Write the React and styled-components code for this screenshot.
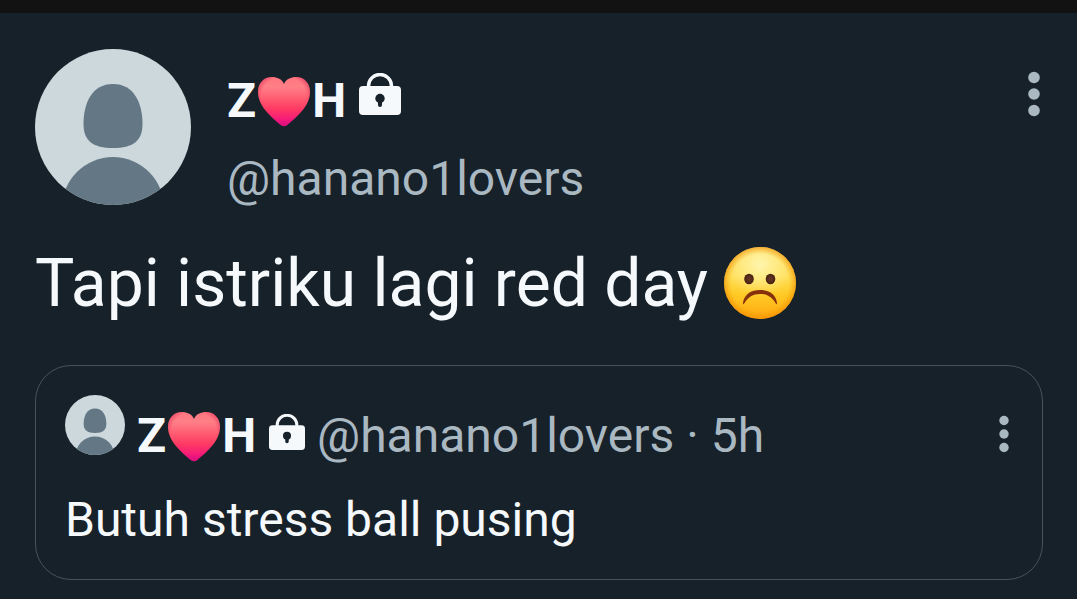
import * as React from 'react'
import styled, { createGlobalStyle } from 'styled-components'

const GlobalStyle = createGlobalStyle`
  * {
    box-sizing: border-box;
  }
  body {
    margin: 0;
    background: #17212a;
    font-family: Roboto, 'Noto Sans', sans-serif;
  }
`
const StatusStrip = styled.div`
  height: 13px;
  background: #121212;
`
const Tweet = styled.article`
  padding: 36px 34px 19px 35px;
  color: #f5f9fc;
`
const Header = styled.header`
  display: flex;
  align-items: flex-start;
`
const AvatarLink = styled.a`
  flex: none;
  width: ${props => props.$size}px;
  height: ${props => props.$size}px;
  border-radius: 50%;
  overflow: hidden;

  svg {
    display: block;
    width: 100%;
    height: 100%;
  }
`
const Author = styled.div`
  display: flex;
  flex: 1;
  flex-direction: ${props => (props.$inline ? 'row' : 'column')};
  gap: ${props => (props.$inline ? '12px' : '22px')};
  padding: ${props => (props.$inline ? '13px 0 0 12px' : '24px 0 0 36px')};
`
const Name = styled.strong`
  display: flex;
  align-items: center;
  font-size: 48px;
  line-height: 56px;
  font-weight: 700;
`
const HeartIcon = styled.svg`
  width: 56px;
  height: 52px;
`
const LockIcon = styled.svg`
  width: ${props => props.$size}px;
  height: ${props => props.$size}px;
  align-self: flex-end;
  margin: 0 0 14px 13px;
`
const Handle = styled.a`
  color: #aab8c2;
  font-size: 48px;
  line-height: 56px;
  text-decoration: none;
`
const Meta = styled.span`
  color: #aab8c2;
  font-size: 48px;
  line-height: 56px;
  white-space: nowrap;
`
const MenuButton = styled.button`
  flex: none;
  display: block;
  width: 18px;
  margin-top: ${props => (props.$small ? '20px' : '22px')};
  padding: 0;
  border: 0;
  background: none;
  color: #aab8c2;
  cursor: pointer;

  svg {
    display: block;
    margin: 0 auto;
    width: 18px;
    height: ${props => (props.$small ? '38px' : '46px')};
  }
`
const TweetText = styled.p`
  margin: 38px 0 43px;
  font-size: 66px;
  line-height: 77px;
`
const Sad = styled.svg`
  width: 72px;
  height: 72px;
  vertical-align: -13px;
`
const Quote = styled.section`
  padding: 29px 29px 31px;
  border: 1px solid #47525c;
  border-radius: 36px;
`
const QuoteText = styled.p`
  margin: 28px 0 0;
  font-size: 48px;
  line-height: 56px;
`

function Avatar ({ size }) {
  return (
    <AvatarLink href="#profile" aria-label="Profile" $size={size}>
      <svg viewBox="0 0 156 156">
        <rect width="156" height="156" fill="#ccd8dc" />
        <path d="M78 35 C99 35 107.500 54 107.500 75 C107.500 92 98 99 78 99 C58 99 48.500 92 48.500 75 C48.500 54 57 35 78 35 Z" fill="#647785" />
        <circle cx="78" cy="159" r="51" fill="#647785" />
      </svg>
    </AvatarLink>
  )
}

function Heart ({ id }) {
  return (
    <HeartIcon viewBox="0 0 56 52" role="img" aria-label="red heart">
      <defs>
        <linearGradient id={`${id}-fill`} x1="0" y1="0" x2="0" y2="1">
          <stop offset="0" stopColor="#ff7580" />
          <stop offset="0.2" stopColor="#ff8087" />
          <stop offset="0.45" stopColor="#ff5a70" />
          <stop offset="0.65" stopColor="#ff3963" />
          <stop offset="0.85" stopColor="#f61d78" />
          <stop offset="1" stopColor="#e300b0" />
        </linearGradient>
        <radialGradient id={`${id}-edge`} cx="0.5" cy="0.42" r="0.58">
          <stop offset="0.75" stopColor="#d81b4c" stopOpacity="0" />
          <stop offset="1" stopColor="#d81b4c" stopOpacity="0.6" />
        </radialGradient>
        <path id={`${id}-shape`} d="M28 9 C26 4 21 2 16 2 C8 2 2 8 2 17 C2 31 15 42 25.500 50.500 Q28 52 30.500 50.500 C41 42 54 31 54 17 C54 8 48 2 40 2 C35 2 30 4 28 9 Z" />
      </defs>
      <use href={`#${id}-shape`} fill={`url(#${id}-fill)`} />
      <use href={`#${id}-shape`} fill={`url(#${id}-edge)`} />
    </HeartIcon>
  )
}

function Lock ({ size }) {
  return (
    <LockIcon $size={size} viewBox="0 0 42 42" role="img" aria-label="Protected account">
      <path d="M9.500 15 V13 A11.500 11.500 0 0 1 32.500 13 V15" fill="none" stroke="#f5f9fc" strokeWidth="3.500" />
      <rect y="13" width="42" height="29" rx="4" fill="#f5f9fc" />
      <circle cx="21" cy="25.500" r="4.700" fill="#17212a" />
      <path d="M19 27 H23 V32 A2 2 0 0 1 19 32 Z" fill="#17212a" />
    </LockIcon>
  )
}

function Menu ({ small }) {
  return (
    <MenuButton type="button" aria-label="More" $small={small}>
      {small
        ? (
          <svg viewBox="0 0 18 38" fill="currentColor">
            <circle cx="9" cy="5.500" r="4.700" />
            <circle cx="9" cy="19" r="4.700" />
            <circle cx="9" cy="32.500" r="4.700" />
          </svg>
          )
        : (
          <svg viewBox="0 0 18 46" fill="currentColor">
            <circle cx="9" cy="6.500" r="5.800" />
            <circle cx="9" cy="23" r="5.800" />
            <circle cx="9" cy="39.500" r="5.800" />
          </svg>
          )}
    </MenuButton>
  )
}

function SadFace () {
  return (
    <Sad viewBox="0 0 72 72" role="img" aria-label="frowning face">
      <defs>
        <linearGradient id="face" x1="0" y1="0" x2="0" y2="1">
          <stop offset="0" stopColor="#ffe56e" />
          <stop offset="0.4" stopColor="#ffe05c" />
          <stop offset="0.65" stopColor="#ffcb27" />
          <stop offset="1" stopColor="#ffa60f" />
        </linearGradient>
        <radialGradient id="shine" cx="0.5" cy="0.25" r="0.45">
          <stop offset="0" stopColor="#fff6b4" stopOpacity="0.9" />
          <stop offset="1" stopColor="#fff5a8" stopOpacity="0" />
        </radialGradient>
        <radialGradient id="rim" cx="0.5" cy="0.5" r="0.5">
          <stop offset="0.8" stopColor="#f39a00" stopOpacity="0" />
          <stop offset="1" stopColor="#f08c00" stopOpacity="0.65" />
        </radialGradient>
        <radialGradient id="eye">
          <stop offset="0" stopColor="#68382a" />
          <stop offset="1" stopColor="#46210f" />
        </radialGradient>
      </defs>
      <circle cx="36" cy="36" r="36" fill="url(#face)" />
      <circle cx="36" cy="36" r="36" fill="url(#shine)" />
      <circle cx="36" cy="36" r="36" fill="url(#rim)" />
      <ellipse cx="25" cy="32" rx="4.800" ry="5.200" fill="url(#eye)" />
      <ellipse cx="46.500" cy="32" rx="4.800" ry="5.200" fill="url(#eye)" />
      <path d="M19 56 C20 47.500 27 43 36 43 C45 43 52 47.500 53 56 C53 57.500 52.300 57.500 51.800 56.500 C48 50 43 47 36 47 C29 47 24 50 20.200 56.500 C19.700 57.500 19 57.500 19 56 Z" fill="#86300c" />
    </Sad>
  )
}

export default function App () {
  return (
    <>
      <GlobalStyle />
      <StatusStrip />
      <Tweet>
        <Header>
          <Avatar size={156} />
          <Author>
            <Name>
              Z<Heart id="author" />H<Lock size={42} />
            </Name>
            <Handle href="#profile">@hanano1lovers</Handle>
          </Author>
          <Menu />
        </Header>
        <TweetText>
          Tapi istriku lagi red day <SadFace />
        </TweetText>
        <Quote>
          <Header>
            <Avatar size={60} />
            <Author $inline>
              <Name>
                Z<Heart id="quoted" />H<Lock size={36} />
              </Name>
              <Handle href="#profile">@hanano1lovers</Handle>
              <Meta>· 5h</Meta>
            </Author>
            <Menu small />
          </Header>
          <QuoteText>Butuh stress ball pusing</QuoteText>
        </Quote>
      </Tweet>
    </>
  )
}
